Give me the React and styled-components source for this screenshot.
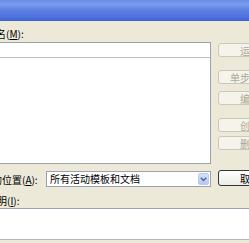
import styled, { createGlobalStyle } from 'styled-components';

const GlobalStyle = createGlobalStyle`
  html, body {
    margin: 0;
    padding: 0;
    background: #ece9d8;
  }
  body {
    font-family: "Noto Sans CJK SC", "Liberation Sans", sans-serif;
  }
`;

const Frame = styled.div`
  width: 249px;
  height: 243px;
  overflow: hidden;
  background: #ece9d8;
`;

const TitleBar = styled.div`
  height: 21px;
  background: linear-gradient(
    #6a8de6 0%,
    #7b9cec 22%,
    #5f82e4 45%,
    #4e72de 80%,
    #3f63d2 100%
  );
`;

const Body = styled.div`
  display: flex;
  flex-direction: column;
  width: 340px;
  margin-left: -30px;
`;

const TopRow = styled.div`
  display: flex;
  gap: 7px;
`;

const LeftCol = styled.div`
  width: 241px;
  display: flex;
  flex-direction: column;
`;

const Label = styled.div`
  height: 13px;
  line-height: 13px;
  font-size: 10px;
  color: #000;
  white-space: nowrap;
  padding-left: ${(p) => p.$indent}px;
  margin-top: ${(p) => p.$top || 0}px;
  u {
    text-decoration-thickness: 1px;
    text-underline-offset: 1px;
  }
`;

const TextInput = styled.div`
  height: 14px;
  margin-top: 2px;
  background: #fff;
  border: 1px solid #9aa3ad;
`;

const ListBox = styled.div`
  height: 105px;
  margin-top: -1px;
  background: #fff;
  border: 1px solid #9aa3ad;
  border-top-color: #b8bec4;
`;

const ComboRow = styled.div`
  display: flex;
  align-items: center;
  height: 16px;
  margin-top: 7px;
`;

const ComboLabel = styled(Label)`
  width: 64px;
`;

const Combo = styled.div`
  flex: 1;
  height: 14px;
  display: flex;
  align-items: center;
  justify-content: space-between;
  padding: 0 1px 0 3px;
  background: #fff;
  border: 1px solid #9aa3ad;
  font-size: 10px;
  line-height: 14px;
  color: #000;
`;

const DropButton = styled.div`
  width: 11px;
  height: 12px;
  display: flex;
  align-items: center;
  justify-content: center;
  border-radius: 2px;
  background: linear-gradient(#d6e2fc, #b4c8f6);
  border: 1px solid #b9c9ee;
  box-sizing: border-box;
`;

const RightCol = styled.div`
  width: 64px;
  display: flex;
  flex-direction: column;
  padding-top: 22px;
`;

const Button = styled.div`
  height: ${(p) => p.$h || 14}px;
  margin-top: ${(p) => p.$top}px;
  box-sizing: border-box;
  display: flex;
  align-items: center;
  justify-content: center;
  font-size: 10px;
  white-space: nowrap;
  border-radius: 3px;
  border: 1px solid ${(p) => (p.$enabled ? '#2f3640' : '#cac8bb')};
  background: ${(p) =>
    p.$enabled ? 'linear-gradient(#ffffff, #ecebe4)' : '#f5f4ea'};
  color: ${(p) => (p.$enabled ? '#000' : '#aca899')};
`;

const DescBox = styled.div`
  height: 30px;
  margin-top: 1px;
  background: #fff;
  border-top: 1px solid #9aa3ad;
  border-bottom: 1px solid #b0b6bc;
`;

const buttons = [
  { text: '运行', top: 0 },
  { text: '单步执行', top: 13 },
  { text: '编辑', top: 7 },
  { text: '创建', top: 13 },
  { text: '删除', top: 4 },
];

function Chevron() {
  return (
    <svg width="7" height="5" viewBox="0 0 7 5">
      <path d="M0.8 0.8 L3.5 3.6 L6.2 0.8" fill="none" stroke="#4d6185" strokeWidth="1.4" />
    </svg>
  );
}

export default function App() {
  return (
    <Frame>
      <GlobalStyle />
      <TitleBar />
      <Body>
        <TopRow>
          <LeftCol>
            <Label $indent={16} $top={6}>
              宏名(<u>M</u>):
            </Label>
            <TextInput />
            <ListBox />
            <ComboRow>
              <ComboLabel $indent={12}>
                宏的位置(<u>A</u>):
              </ComboLabel>
              <Combo>
                <span>所有活动模板和文档</span>
                <DropButton>
                  <Chevron />
                </DropButton>
              </Combo>
            </ComboRow>
          </LeftCol>
          <RightCol>
            {buttons.map((b) => (
              <Button key={b.text} $top={b.top}>
                {b.text}
              </Button>
            ))}
            <Button $top={20} $h={16} $enabled>
              取消
            </Button>
          </RightCol>
        </TopRow>
        <Label $indent={7} $top={7}>
          宏说明(<u>I</u>):
        </Label>
        <DescBox />
      </Body>
    </Frame>
  );
}
